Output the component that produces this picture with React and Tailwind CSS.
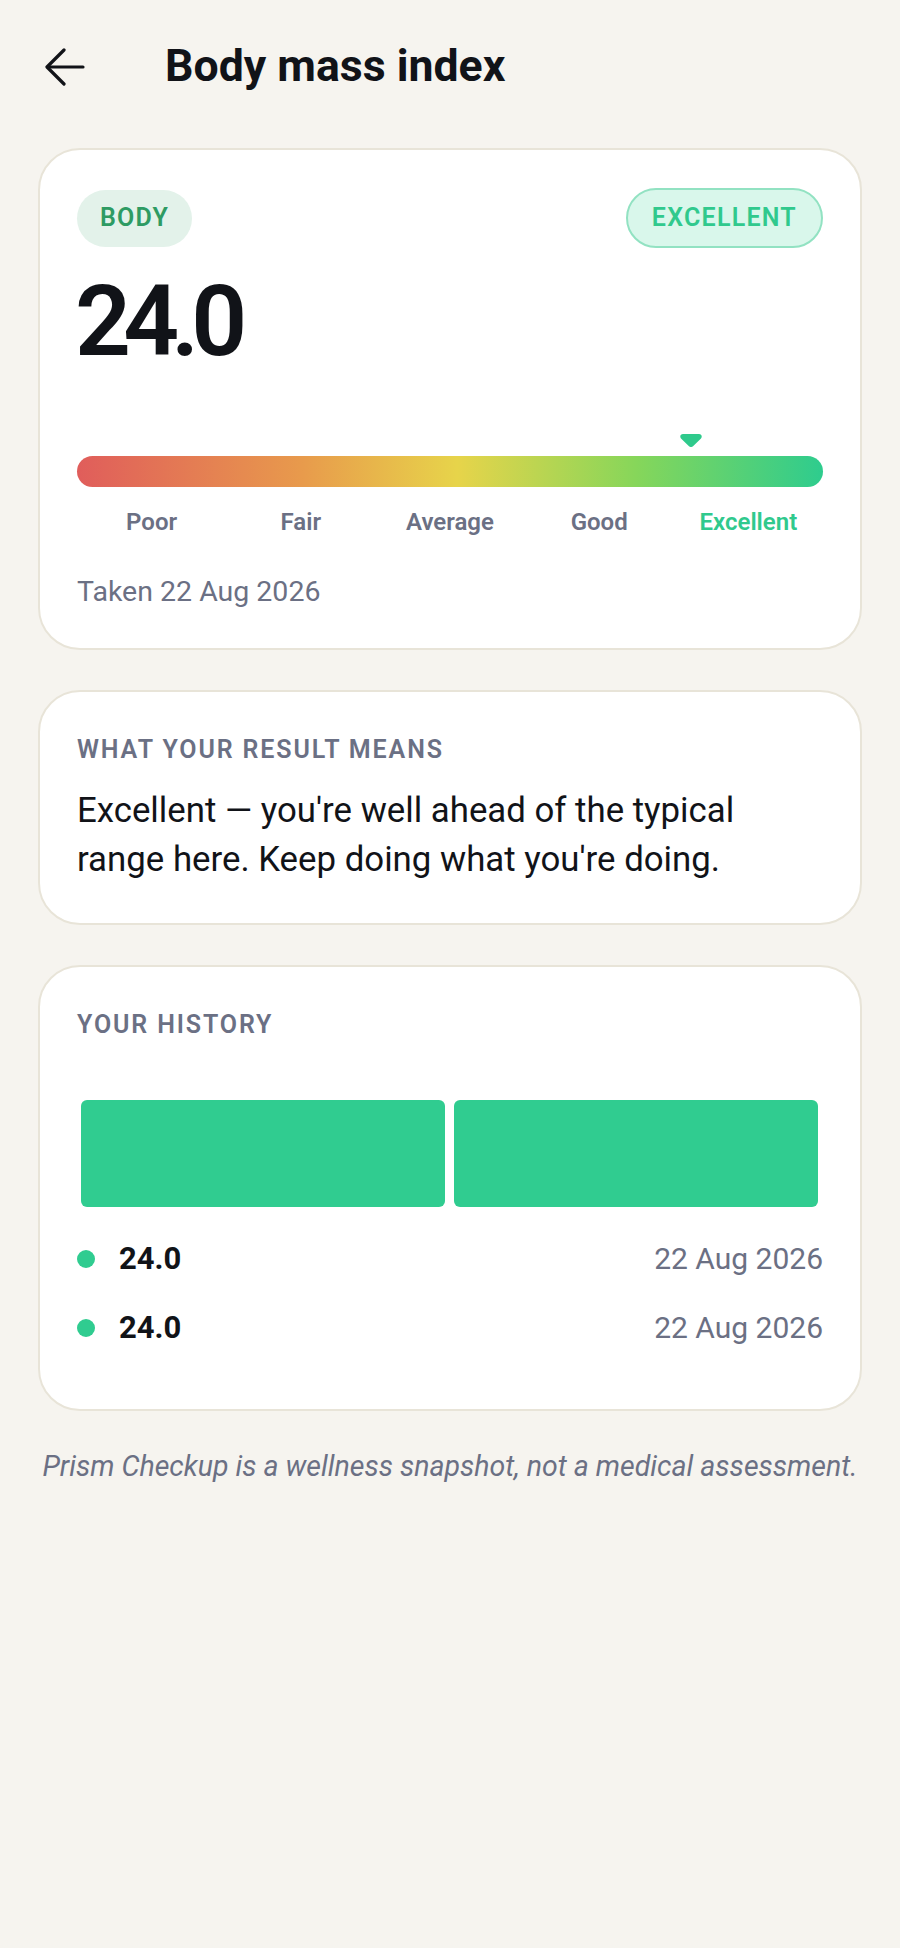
import React from 'react';

const history = [
  { value: '24.0', date: '22 Aug 2026' },
  { value: '24.0', date: '22 Aug 2026' },
];

const bands = ['Poor', 'Fair', 'Average', 'Good', 'Excellent'];

function BackArrow() {
  return (
    <svg width="40" height="40" viewBox="0 0 40 40" fill="none" stroke="#111318" strokeWidth="3.2" strokeLinecap="round" strokeLinejoin="round">
      <path d="M38 20H3" />
      <path d="M19 3L2 20l17 17" />
    </svg>
  );
}

function Card({ className = '', children }) {
  return (
    <div className={'bg-white border-2 border-[#e8e4d8] rounded-[42px] px-[37px] ' + className}>
      {children}
    </div>
  );
}

export default function App() {
  return (
    <div className="min-h-screen bg-[#f6f4ef] font-['Roboto',sans-serif] text-[#111318]">
      <header className="flex items-center gap-[80px] px-[45px] pt-[40px]">
        <BackArrow />
        <h1 className="text-[44.6px] leading-[53px] font-bold">Body mass index</h1>
      </header>

      <main className="mx-[38px] mt-[55px] flex flex-col gap-[40px]">
        <Card className="pt-[38px] pb-[36px]">
          <div className="flex items-center justify-between h-[60px]">
            <span className="h-[57px] px-[23px] flex items-center rounded-full bg-[#e3f2ea] text-[#2e9b63] text-[25px] font-semibold tracking-[0.05em]">
              BODY
            </span>
            <span className="h-[60px] px-[24px] flex items-center rounded-full bg-[#d9f7eb] border-2 border-[#92e2c2] text-[#30c98d] text-[25px] font-semibold tracking-[0.05em]">
              EXCELLENT
            </span>
          </div>

          <div className="mt-[25px] -ml-[2px] text-[98px] leading-none font-semibold tracking-[-0.08em]">24.0</div>

          <div className="relative mt-[63px] h-[13px]">
            <svg className="absolute top-0 left-[82.3%] -translate-x-1/2" width="22" height="13" viewBox="0 0 22 13">
              <path d="M3 0h16c2.4 0 3.6 2.6 2 4.4l-8 7.8c-1.1 1.1-2.9 1.1-4 0l-8-7.8C-0.6 2.6 0.6 0 3 0z" fill="#2fca8c" />
            </svg>
          </div>
          <div className="mt-[9px] h-[31px] rounded-full bg-[linear-gradient(90deg,#e05d5b_0%,#e89a4c_30%,#e7d44a_51%,#86d65a_75%,#2ecc8e_100%)]" />

          <div className="mt-[20px] grid grid-cols-5 text-center text-[24px] leading-[30px] font-semibold">
            {bands.map(b => (
              <span key={b} className={b === 'Excellent' ? 'text-[#30c98d]' : 'text-[#6b7084]'}>{b}</span>
            ))}
          </div>

          <p className="mt-[35px] text-[28.5px] leading-[40px] text-[#6b7084]">Taken 22 Aug 2026</p>
        </Card>

        <Card className="pt-[42px] pb-[39px]">
          <h2 className="text-[25px] leading-[32px] font-semibold tracking-[0.075em] text-[#6b7084]">WHAT YOUR RESULT MEANS</h2>
          <p className="mt-[20px] text-[34.8px] leading-[49px] pr-[60px]">
            Excellent — you're well ahead of the typical range here. Keep doing what you're doing.
          </p>
        </Card>

        <Card className="pt-[42px] pb-[62px]">
          <h2 className="text-[25px] leading-[32px] font-semibold tracking-[0.075em] text-[#6b7084]">YOUR HISTORY</h2>
          <div className="mt-[16px] h-[150px] flex items-end gap-[9px] pl-[4px] pr-[5px]">
            {history.map((h, i) => (
              <div key={i} className="flex-1 h-[107px] rounded-[6px] bg-[#30cc90]" />
            ))}
          </div>
          <ul className="mt-[32px] flex flex-col gap-[30px]">
            {history.map((h, i) => (
              <li key={i} className="flex items-center justify-between text-[30px] leading-[39px]">
                <div className="flex items-center gap-[24px]">
                  <span className="w-[18px] h-[18px] rounded-full bg-[#30cc90]" />
                  <span className="text-[31px] font-bold">{h.value}</span>
                </div>
                <span className="text-[#6b7084]">{h.date}</span>
              </li>
            ))}
          </ul>
        </Card>
      </main>

      <p className="mt-[36px] text-center italic text-[28.5px] leading-[40px] text-[#6b7084]">
        Prism Checkup is a wellness snapshot, not a medical assessment.
      </p>
    </div>
  );
}
